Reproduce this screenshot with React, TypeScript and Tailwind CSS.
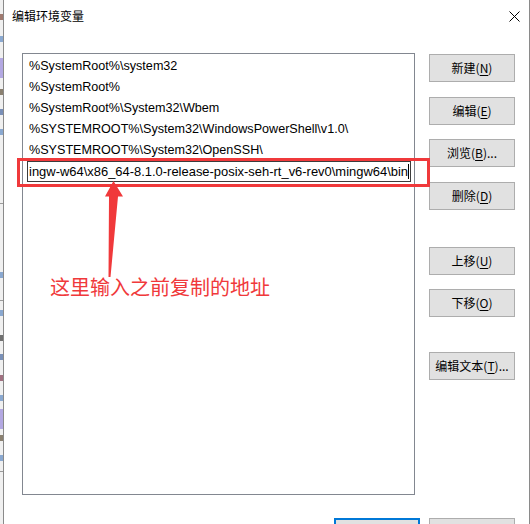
import React from "react";

const LATIN = { fontFamily: '"Liberation Sans", "Noto Sans CJK SC", sans-serif' };
const CJK = { fontFamily: '"Noto Sans CJK SC", "Liberation Sans", sans-serif' };

function Btn({ label, acc, tail = "", className = "" }: { label: string; acc: string; tail?: string; className?: string }) {
  return (
    <div
      className={`w-[86px] h-[28px] bg-[#e1e1e1] border border-[#adadad] flex items-center justify-center text-[12px] text-black ${className}`}
      style={CJK}
    >
      <span>
        {label}(<span className="underline underline-offset-2">{acc}</span>){tail}
      </span>
    </div>
  );
}

const items = [
  "%SystemRoot%\\system32",
  "%SystemRoot%",
  "%SystemRoot%\\System32\\Wbem",
  "%SYSTEMROOT%\\System32\\WindowsPowerShell\\v1.0\\",
  "%SYSTEMROOT%\\System32\\OpenSSH\\",
];

function Strip() {
  const marks: { h: number; c: string }[] = [
    { h: 14, c: "transparent" },
    { h: 6, c: "#a07a70" },
    { h: 16, c: "transparent" },
    { h: 6, c: "#8aa8d0" },
    { h: 16, c: "transparent" },
    { h: 20, c: "#b3a8e2" },
    { h: 11, c: "transparent" },
    { h: 6, c: "#8a8070" },
    { h: 14, c: "transparent" },
    { h: 6, c: "#7a90b8" },
    { h: 14, c: "transparent" },
    { h: 6, c: "#8aa8d0" },
    { h: 68, c: "transparent" },
    { h: 1, c: "#9a9a9a" },
    { h: 68, c: "transparent" },
    { h: 6, c: "#8aa8d0" },
    { h: 22, c: "transparent" },
    { h: 1, c: "#9a9a9a" },
    { h: 9, c: "transparent" },
    { h: 6, c: "#8aa8d0" },
    { h: 19, c: "transparent" },
    { h: 6, c: "#707070" },
    { h: 13, c: "transparent" },
    { h: 6, c: "#7a90b8" },
    { h: 15, c: "transparent" },
    { h: 6, c: "#a07080" },
    { h: 14, c: "transparent" },
    { h: 6, c: "#8aa8d0" },
    { h: 8, c: "transparent" },
    { h: 20, c: "#b3a8e2" },
    { h: 6, c: "transparent" },
    { h: 6, c: "#8a8070" },
    { h: 14, c: "transparent" },
    { h: 6, c: "#8aa8d0" },
    { h: 10, c: "transparent" },
    { h: 1, c: "#9a9a9a" },
  ];
  return (
    <div className="w-[3px] h-full bg-[#f0f0f0] flex flex-col shrink-0">
      {marks.map((m, i) => (
        <div key={i} style={{ height: m.h, background: m.c }} className="w-full shrink-0" />
      ))}
    </div>
  );
}

export default function App() {
  return (
    <div className="w-[530px] h-[524px] bg-white flex overflow-hidden relative">
      <Strip />
      <div className="flex-1 h-full border-l border-r border-[#8a8a8a] flex flex-col">
        {/* title bar */}
        <div className="h-[32px] flex items-center justify-between pl-[8px] pr-[9px] shrink-0">
          <span className="text-[12px] text-black" style={CJK}>
            编辑环境变量
          </span>
          <svg width="11" height="11" viewBox="0 0 11 11">
            <path d="M0.5 0.5 L10.5 10.5 M10.5 0.5 L0.5 10.5" stroke="#000" strokeWidth="1" />
          </svg>
        </div>
        {/* body */}
        <div className="flex pl-[18px] pt-[21px] shrink-0">
          <div className="w-[393px] h-[442px] border border-[#828790] pt-[2px] flex flex-col text-[12.6px] text-black" style={LATIN}>
            {items.map((t) => (
              <div key={t} className="h-[21px] flex items-center pl-[6px] shrink-0 whitespace-nowrap">
                {t}
              </div>
            ))}
            <div className="h-[21px] flex items-center pl-[4px] pr-[3px] shrink-0">
              <div className="w-full h-[21px] border border-[#3c3c3c] flex items-center justify-end overflow-hidden whitespace-nowrap pr-[1px] text-[12.95px]">
                <span>ingw-w64\x86_64-8.1.0-release-posix-seh-rt_v6-rev0\mingw64\bin</span>
                <span className="inline-block w-[1px] h-[15px] bg-black shrink-0" />
              </div>
            </div>
          </div>
          <div className="flex flex-col ml-[14px] pt-[1px]">
            <Btn label="新建" acc="N" />
            <Btn label="编辑" acc="E" className="mt-[15px]" />
            <Btn label="浏览" acc="B" tail="..." className="mt-[14px]" />
            <Btn label="删除" acc="D" className="mt-[15px]" />
            <Btn label="上移" acc="U" className="mt-[37px]" />
            <Btn label="下移" acc="O" className="mt-[14px]" />
            <Btn label="编辑文本" acc="T" tail="..." className="mt-[35px]" />
          </div>
        </div>
        {/* footer */}
        <div className="flex justify-end gap-[9px] pr-[14px] mt-[23px] shrink-0">
          <div className="w-[86px] h-[28px] border-2 border-[#0078d7] bg-[#e1e1e1]" />
          <div className="w-[86px] h-[28px] border border-[#adadad] bg-[#e1e1e1]" />
        </div>
      </div>

      {/* annotation: red box */}
      <div className="absolute left-[17px] top-[158px] w-[413px] h-[29px] border-[3px] border-[#f0393b] pointer-events-none" />
      {/* annotation: arrow */}
      <svg className="absolute left-0 top-0 pointer-events-none" width="530" height="524">
        <polygon
          points="113.5,181 123,196.5 118,196.5 110.5,277 108.5,277 109,196.5 105,196.5"
          fill="#f0393b"
        />
      </svg>
      {/* annotation: text */}
      <div className="absolute left-[50px] top-[274px] text-[20px] leading-[26px] text-[#f0393b] whitespace-nowrap" style={CJK}>
        这里输入之前复制的地址
      </div>
    </div>
  );
}
